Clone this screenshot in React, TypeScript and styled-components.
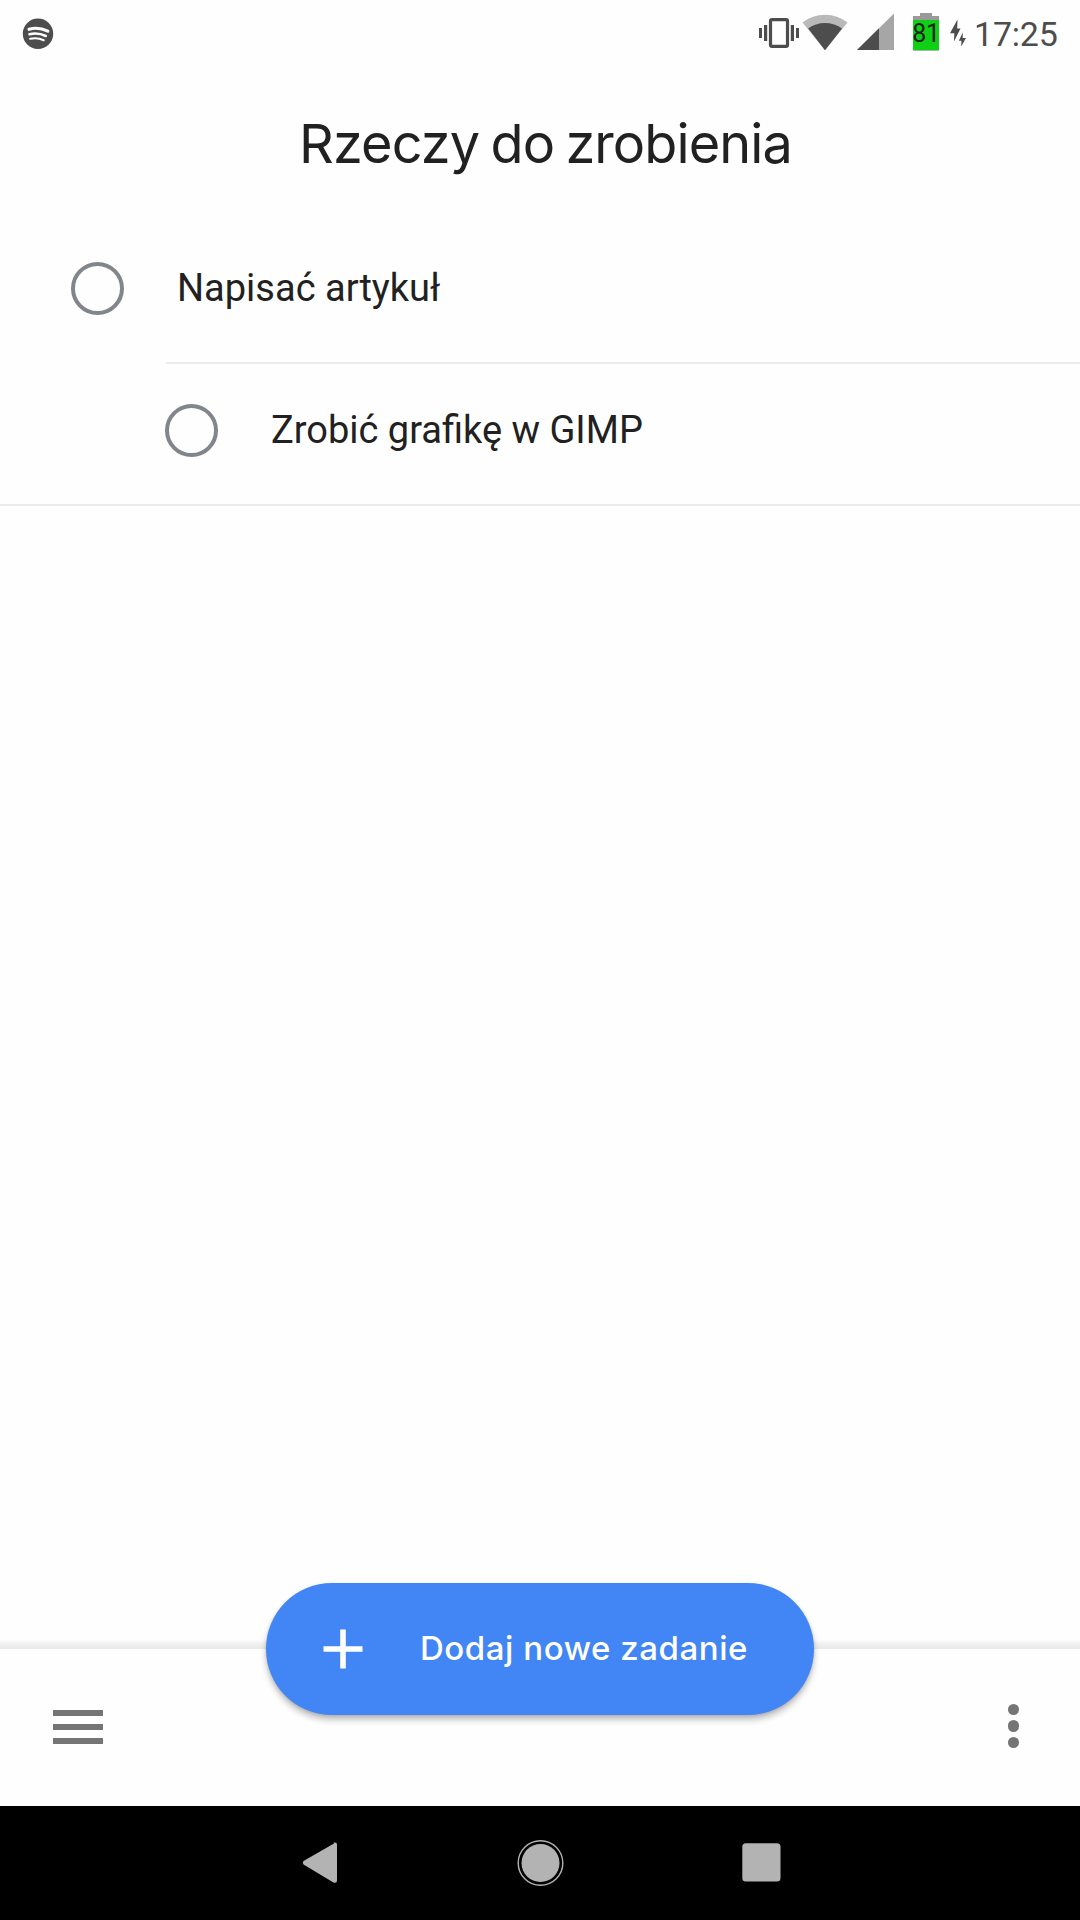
import React from "react";
import styled, { createGlobalStyle } from "styled-components";

const GlobalStyle = createGlobalStyle`
  * { box-sizing: border-box; }
  body { margin: 0; background: #fefefe; }
`;

const Screen = styled.div`
  width: 1080px;
  height: 1920px;
  display: flex;
  flex-direction: column;
  background: #fefefe;
  color: #212121;
  font-family: Roboto, sans-serif;
  overflow: hidden;
`;

const StatusBar = styled.div`
  height: 66px;
  flex: none;
  display: flex;
  align-items: center;
  justify-content: space-between;
  padding: 0 20px 0 22px;
`;

const StatusGroup = styled.div`
  display: flex;
  align-items: center;
`;

const StatusIcon = styled.svg<{ $gap?: number }>`
  display: block;
  flex: none;
  margin-right: ${(p) => p.$gap ?? 0}px;
`;

const Battery = styled.div`
  display: flex;
  flex-direction: column;
  align-items: center;
  width: 26px;
  height: 38px;
  margin: 0 11px 2px 17px;
`;

const BatteryCap = styled.div`
  width: 12px;
  height: 3px;
  background: #9a9a9a;
`;

const BatteryBody = styled.div`
  width: 26px;
  height: 35px;
  border-top: 4px solid #9a9a9a;
  border-bottom: 1px solid #9fbf9f;
  background: #0fd015;
  color: #212121;
  font-size: 25px;
  line-height: 28px;
  letter-spacing: -0.4px;
  display: flex;
  justify-content: center;
  white-space: nowrap;
`;

const Clock = styled.span`
  width: 86px;
  font-size: 34px;
  line-height: 40px;
  letter-spacing: -0.2px;
  color: #4d4d4d;
  white-space: nowrap;
  padding-top: 2px;
`;

const Title = styled.h1`
  margin: 0;
  height: 156px;
  flex: none;
  padding: 42px 0 0 11px;
  text-align: center;
  font: 400 54px/72px Inter, sans-serif;
  letter-spacing: -0.9px;
  word-spacing: -3px;
`;

const TaskList = styled.ul`
  margin: 0;
  padding: 0;
  list-style: none;
  flex: 1;
`;

const TaskRow = styled.li<{ $indent: number }>`
  height: 142px;
  display: flex;
  align-items: center;
  padding: 0 0 10px ${(p) => p.$indent}px;
`;

const Divider = styled.div<{ $inset: number }>`
  height: 2px;
  margin: -2px 0 0 ${(p) => p.$inset}px;
  background: #ebebeb;
`;

const Check = styled.button`
  width: 53px;
  height: 53px;
  flex: none;
  padding: 0;
  border: 4px solid #80868b;
  border-radius: 50%;
  background: none;
  margin-right: 53px;
`;

const TaskName = styled.span`
  font-size: 38px;
  line-height: 48px;
  white-space: nowrap;
`;

const BottomBar = styled.div`
  position: relative;
  height: 157px;
  flex: none;
  display: flex;
  align-items: center;
  justify-content: space-between;
  padding: 0 61px 0 53px;
  background: #fefefe;
`;

const BarShadow = styled.div`
  height: 10px;
  flex: none;
  background: linear-gradient(to bottom, #fefefe 0%, #eeeeee 60%, #e8e9ea 100%);
`;

const MenuButton = styled.button`
  display: flex;
  flex-direction: column;
  gap: 8px;
  padding: 0;
  margin-bottom: 1px;
  border: 0;
  background: none;
`;

const MenuLine = styled.span`
  width: 50px;
  height: 6px;
  background: #757575;
`;

const MoreButton = styled(MenuButton)`
  gap: 5.1px;
  margin-bottom: 3px;
`;

const Dot = styled.span`
  width: 11.5px;
  height: 11.5px;
  border-radius: 50%;
  background: #757575;
`;

const AddButton = styled.button`
  position: absolute;
  left: 266px;
  top: -66px;
  width: 548px;
  height: 132px;
  display: flex;
  align-items: center;
  padding: 0 0 0 57px;
  border: 0;
  border-radius: 66px;
  background: #4285f4;
  color: #fff;
  font: 500 33px/44px Inter, sans-serif;
  letter-spacing: 0.55px;
  white-space: nowrap;
  box-shadow: 0 5px 6px rgba(0, 0, 0, 0.24), 0 1px 3px rgba(0, 0, 0, 0.12);
`;

const AddLabel = styled.span`
  padding-bottom: 2px;
`;

const PlusIcon = styled.svg`
  flex: none;
  margin-right: 57px;
`;

const NavBar = styled.nav`
  height: 114px;
  flex: none;
  display: flex;
  align-items: center;
  justify-content: space-between;
  padding: 0 299px 1px 301px;
  background: #000;
`;

const tasks = [
  { name: "Napisać artykuł", indent: 71, divider: 166 },
  { name: "Zrobić grafikę w GIMP", indent: 165, divider: 0 },
];

export default function App() {
  return (
    <Screen>
      <GlobalStyle />
      <StatusBar>
        <StatusIcon width="32" height="40" viewBox="22 13 32 40">
          <circle cx="38" cy="33.8" r="15.2" fill="#4d4d4d" />
          <g fill="none" stroke="#fefefe" strokeLinecap="round">
            <path d="M29 29.3 Q38.5 26.6 47.8 31.2" strokeWidth="3.1" />
            <path d="M29.5 34.2 Q38 32.2 45.8 36" strokeWidth="2.6" />
            <path d="M30.2 38.8 Q37.5 37.2 43.7 40.2" strokeWidth="2.1" />
          </g>
        </StatusIcon>
        <StatusGroup>
          <StatusIcon width="45" height="40" viewBox="756 13 45 40">
            <rect x="770.5" y="19.7" width="17" height="26.6" rx="1.6" fill="none" stroke="#4d4d4d" strokeWidth="3.2" />
            <path d="M759 28h3v10h-3zM764 25h3.2v16H764zM790.8 25h3.2v16h-3.2zM796 28h3v10h-3z" fill="#4d4d4d" />
          </StatusIcon>
          <StatusIcon width="48" height="40" viewBox="801 13 48 40" $gap={6}>
            <path d="M825 50.3 802.5 22.5Q812.5 14.8 825 14.8T847.5 22.5Z" fill="#b9b9b9" />
            <path d="M825 50.3 808.2 28.5Q815.5 23 825 23T842 28.5Z" fill="#4d4d4d" />
          </StatusIcon>
          <StatusIcon width="41" height="40" viewBox="855 13 41 40">
            <path d="M857 50 894 13.5V50Z" fill="#a6a6a6" />
            <path d="M857 50 879 28.3V50Z" fill="#4d4d4d" />
          </StatusIcon>
          <Battery>
            <BatteryCap />
            <BatteryBody>81</BatteryBody>
          </Battery>
          <StatusIcon width="18" height="40" viewBox="950 13 18 40" $gap={6}>
            <path d="M957.5 19.5 950 33.3H954.3L954 41.5 960.5 28.5H957.2ZM962.8 32.5 958.8 40.8H961.4L961.2 46.5 966 38H962.7Z" fill="#4d4d4d" />
          </StatusIcon>
          <Clock>17:25</Clock>
        </StatusGroup>
      </StatusBar>
      <Title>Rzeczy do zrobienia</Title>
      <TaskList>
        {tasks.map((t) => (
          <React.Fragment key={t.name}>
            <TaskRow $indent={t.indent}>
              <Check aria-label={t.name} />
              <TaskName>{t.name}</TaskName>
            </TaskRow>
            <Divider as="li" $inset={t.divider} />
          </React.Fragment>
        ))}
      </TaskList>
      <BarShadow />
      <BottomBar>
        <MenuButton aria-label="Menu">
          <MenuLine />
          <MenuLine />
          <MenuLine />
        </MenuButton>
        <AddButton>
          <PlusIcon width="40" height="40" viewBox="0 0 40 40">
            <path d="M17.2 .5h5.6v16.8h16.7v5.4H22.8v16.8h-5.6V22.7H.5v-5.4h16.7z" fill="#fff" />
          </PlusIcon>
          <AddLabel>Dodaj nowe zadanie</AddLabel>
        </AddButton>
        <MoreButton aria-label="Opcje">
          <Dot />
          <Dot />
          <Dot />
        </MoreButton>
      </BottomBar>
      <NavBar>
        <svg width="38" height="44" viewBox="301 1841 38 44">
          <path d="M334 1843.5 303.5 1861Q302 1862.5 303.5 1864.5L333 1882.2Q337 1883.8 337 1880.5V1844.5Q337 1841.5 333.5 1842.8Z" fill="#b3b3b3" />
        </svg>
        <svg width="48" height="48" viewBox="0.5 0 48 48">
          <circle cx="24" cy="24" r="22.3" fill="none" stroke="#b3b3b3" strokeWidth="1.4" />
          <circle cx="24" cy="24" r="19" fill="#b3b3b3" />
        </svg>
        <svg width="39" height="39" viewBox="0 0 39 39">
          <rect x=".3" y=".3" width="38.2" height="38.2" rx="3.5" fill="#b3b3b3" />
        </svg>
      </NavBar>
    </Screen>
  );
}
